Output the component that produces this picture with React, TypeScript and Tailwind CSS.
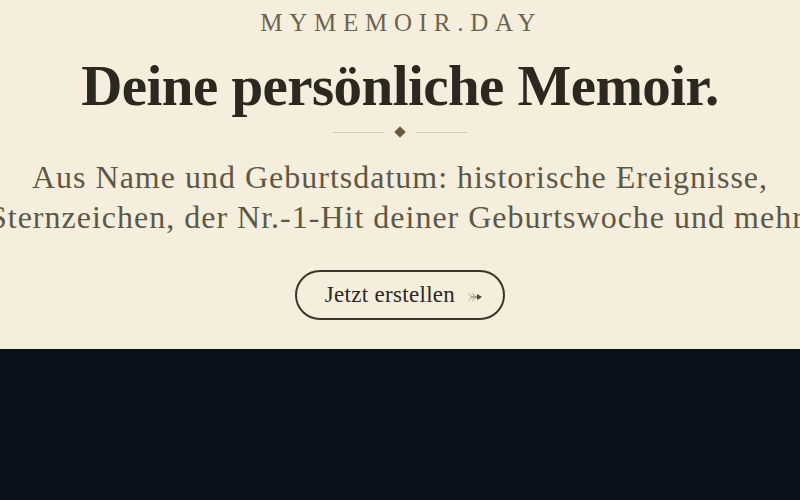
import React from "react";

export default function App() {
  const serif = { fontFamily: '"Liberation Serif", "DejaVu Serif", serif' };
  return (
    <div className="w-[800px] h-[500px] overflow-hidden flex flex-col bg-[#0a121c]" style={serif}>
      <section className="h-[349px] bg-[#f5eedd] flex flex-col items-center shrink-0">
        <div className="mt-[8px] text-[25px] leading-[30px] tracking-[0.27em] pl-[0.1em] text-[#6b6450]">
          MYMEMOIR.DAY
        </div>
        <h1 className="mt-[16px] text-[57px] leading-[64px] font-bold text-[#2b2820] whitespace-nowrap tracking-[-0.01em]">
          Deine persönliche Memoir.
        </h1>
        <div className="mt-[10px] flex items-center gap-[12px]">
          <div className="w-[51px] h-px bg-[#d3c9ae]" />
          <div className="w-[8px] h-[8px] rotate-45 bg-[#6b5b3c]" />
          <div className="w-[51px] h-px bg-[#d3c9ae]" />
        </div>
        <div className="mt-[21px] w-full flex flex-col items-center text-[32px] leading-[40px] tracking-[1px] text-[#5d5846]">
          <span className="whitespace-nowrap">Aus Name und Geburtsdatum: historische Ereignisse,</span>
          <span className="whitespace-nowrap">Sternzeichen, der Nr.-1-Hit deiner Geburtswoche und mehr.</span>
        </div>
        <button className="mt-[33px] w-[210px] h-[50px] rounded-full border-2 border-[#3a352a] flex items-center justify-center gap-[12px] text-[23px] tracking-[0.3px] text-[#2b2820] pl-[8px]">
          <span>Jetzt erstellen</span>
          <svg width="16" height="12" viewBox="0 0 16 12" className="mt-[3px]">
            <path d="M1 2 L5 6 L1 10" fill="none" stroke="#d2ccbd" strokeWidth="1.4" />
            <path d="M5 2 L9 6 L5 10" fill="none" stroke="#c2bba9" strokeWidth="1.4" />
            <path d="M4 6 H11" stroke="#8f887a" strokeWidth="1.3" />
            <path d="M10 3 L15 6 L10 9 Z" fill="#4a4537" />
          </svg>
        </button>
      </section>
      <section className="flex-1 bg-[#0a121c]" />
    </div>
  );
}
